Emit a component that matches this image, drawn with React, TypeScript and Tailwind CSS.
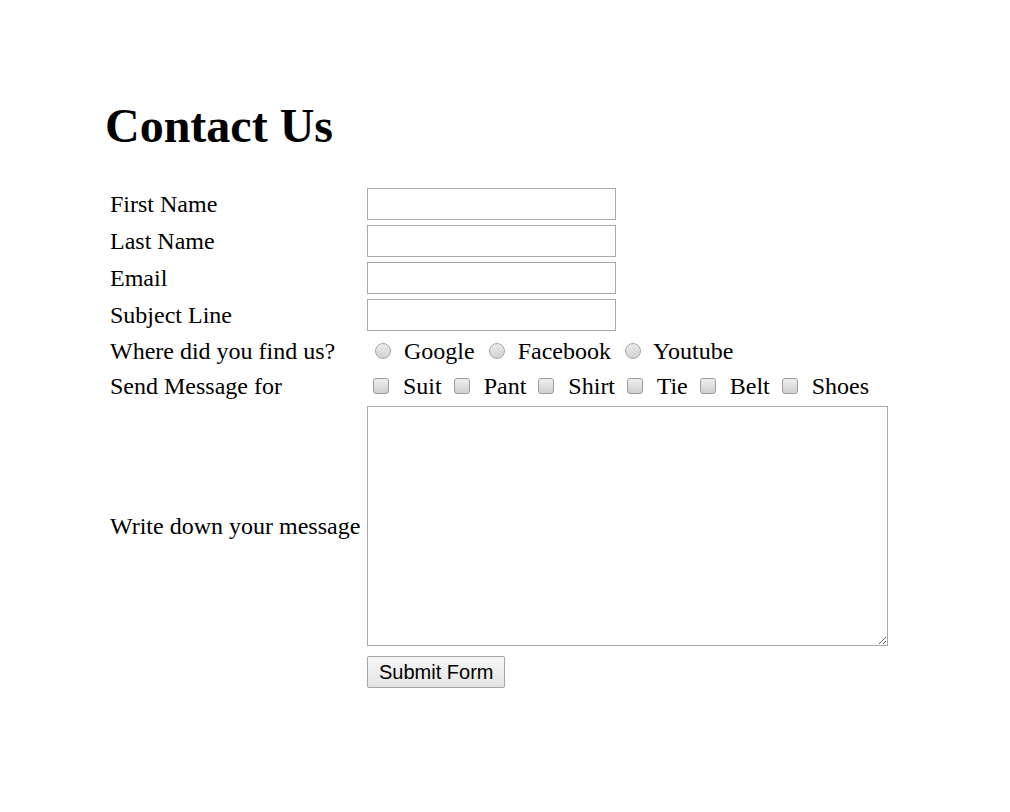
const inputClass = 'w-[249px] h-[32px] border border-[#a9a9a9] bg-white outline-none';

const textFields = ['First Name', 'Last Name', 'Email', 'Subject Line'];
const sources = ['Google', 'Facebook', 'Youtube'];
const items = ['Suit', 'Pant', 'Shirt', 'Tie', 'Belt', 'Shoes'];

export default function App() {
  return (
    <div className="min-h-[812px] bg-white pt-[98px] pl-[105px] text-black font-['Liberation_Serif','Times_New_Roman',serif]">
      <h1 className="text-[48px] font-bold leading-[normal]">Contact Us</h1>

      <form className="mt-[35px] ml-[5px] grid grid-cols-[257px_auto] gap-y-[5px] items-center text-[24px] leading-[normal]">
        {textFields.map((label) => (
          <div key={label} className="contents">
            <div>{label}</div>
            <div className="flex">
              <input type="text" className={inputClass} />
            </div>
          </div>
        ))}

        <div>Where did you find us?</div>
        <div className="whitespace-nowrap leading-[30px] h-[30px]">
          {sources.map((s, i) => (
            <span key={s}>
              {i > 0 && ' '}
              <input
                type="radio"
                name="source"
                className="appearance-none w-4 h-4 ml-[8px] mr-[7px] rounded-full border border-[#a6a6a6] bg-gradient-to-b from-[#ebebeb] to-[#d2d2d2]"
              />{' '}
              {s}
            </span>
          ))}
        </div>

        <div>Send Message for</div>
        <div className="whitespace-nowrap leading-[30px] h-[30px]">
          {items.map((s, i) => (
            <span key={s}>
              {i > 0 && ' '}
              <input
                type="checkbox"
                className="appearance-none w-4 h-4 ml-[6px] mr-[8px] rounded-[3px] border border-[#9c9c9c] bg-gradient-to-b from-[#ededed] to-[#d0d0d0]"
              />{' '}
              {s}
            </span>
          ))}
        </div>

        <div>Write down your message</div>
        <div className="flex">
          <textarea className="w-[521px] h-[240px] border border-[#a9a9a9] bg-white outline-none" />
        </div>

        <div />
        <div className="mt-[5px] flex">
          <button
            type="button"
            className="h-[32px] px-[11px] border border-[#a6a6a6] rounded-[2px] bg-gradient-to-b from-[#f6f6f6] to-[#e4e4e4] text-[20px] leading-none font-['Liberation_Sans',Arial,sans-serif]"
          >
            Submit Form
          </button>
        </div>
      </form>
    </div>
  );
}
